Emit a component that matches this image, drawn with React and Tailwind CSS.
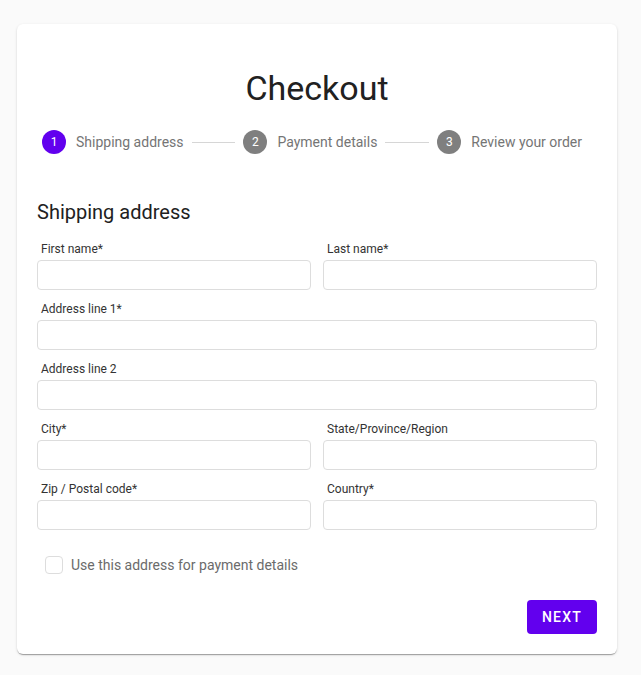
import React from "react";

const steps = ["Shipping address", "Payment details", "Review your order"];

function Field({ label, className = "" }) {
  return (
    <div className={`flex flex-col gap-[2px] ${className}`}>
      <label className="pl-1 text-xs leading-[18px] text-[#333333]">{label}</label>
      <input className="h-[30px] w-full rounded border border-[#dddddd] bg-white px-2 text-sm outline-none" />
    </div>
  );
}

export default function App() {
  return (
    <div
      className="min-h-screen bg-[#fafafa] pt-6"
      style={{ fontFamily: "Roboto, 'Liberation Sans', sans-serif" }}
    >
      <div className="ml-[17px] w-[600px] rounded-md bg-white px-5 pb-5 pt-[43px] shadow-[0_2px_1px_-1px_rgba(0,0,0,0.2),0_1px_1px_0_rgba(0,0,0,0.14),0_1px_3px_0_rgba(0,0,0,0.12)]">
        <h1 className="text-center text-[34px] leading-[42px] text-[#212121]">Checkout</h1>

        {/* stepper */}
        <div className="ml-[-3px] mr-[7px] mt-[21px] flex items-center">
          {steps.map((s, i) => (
            <React.Fragment key={s}>
              {i > 0 && <div className="h-px flex-1 bg-[#d6d6d6]" />}
              <div className="flex items-center gap-[10px] px-2">
                <span
                  className={`flex h-6 w-6 items-center justify-center rounded-full text-xs text-white ${
                    i === 0 ? "bg-[#6200ee]" : "bg-[#7f7f7f]"
                  }`}
                >
                  {i + 1}
                </span>
                <span className="text-sm text-[#757575]">{s}</span>
              </div>
            </React.Fragment>
          ))}
        </div>

        <h2 className="mt-[42px] text-xl leading-8 text-[#212121]">Shipping address</h2>

        <form className="mt-3 grid grid-cols-2 gap-x-3 gap-y-[10px]">
          <Field label="First name*" />
          <Field label="Last name*" />
          <Field label="Address line 1*" className="col-span-2" />
          <Field label="Address line 2" className="col-span-2" />
          <Field label="City*" />
          <Field label="State/Province/Region" />
          <Field label="Zip / Postal code*" />
          <Field label="Country*" />
        </form>

        <label className="ml-2 mt-[26px] flex items-center gap-2">
          <span className="h-[18px] w-[18px] rounded border border-[#dddddd]" />
          <span className="text-sm leading-[18px] text-[#6b6b6b]">Use this address for payment details</span>
        </label>

        <div className="mt-[26px] flex justify-end">
          <button className="h-[34px] w-[70px] rounded bg-[#6200ee] text-sm font-medium tracking-[1.25px] text-white">
            NEXT
          </button>
        </div>
      </div>
    </div>
  );
}
